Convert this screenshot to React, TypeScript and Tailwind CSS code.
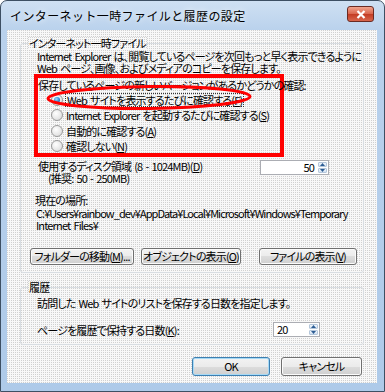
import type { ReactNode } from "react";

const dither =
  "bg-[#f8f8f8] bg-[conic-gradient(at_1px_1px,transparent_75%,#d0d0d0_0)] [background-size:2px_2px]";

function U({ children }: { children: ReactNode }) {
  return <span className="underline underline-offset-[1px]">{children}</span>;
}

function Radio({ checked }: { checked?: boolean }) {
  return (
    <div className="flex h-[12px] w-[12px] shrink-0 items-center justify-center rounded-full border border-[#9a9a9a] bg-[radial-gradient(circle_at_40%_35%,#ffffff,#e2e2e2_70%,#cfcfcf)]">
      {checked && (
        <div className="h-[6px] w-[6px] rounded-full bg-[radial-gradient(circle_at_40%_35%,#9fe0ff,#2b86d0_55%,#0f4f8f)]" />
      )}
    </div>
  );
}

function Arrow({ up }: { up?: boolean }) {
  return (
    <svg width="5" height="3" viewBox="0 0 5 3">
      <path d={up ? "M2.5 0 L5 3 L0 3 Z" : "M0 0 L5 0 L2.5 3 Z"} fill="#2d5d94" />
    </svg>
  );
}

function Spin({ value, className, right }: { value: string; className: string; right?: boolean }) {
  return (
    <div className={`flex shrink-0 border border-[#abadb3] bg-white ${className}`}>
      <div className={`flex flex-1 items-center px-[3px] ${right ? "justify-end" : "justify-start"}`}>{value}</div>
      <div className="flex w-[11px] flex-col gap-px p-px">
        <div className="flex flex-1 items-center justify-center rounded-[1px] border border-[#b5c7db] bg-gradient-to-b from-[#f3f7fc] to-[#d3e2f2]">
          <Arrow up />
        </div>
        <div className="flex flex-1 items-center justify-center rounded-[1px] border border-[#b5c7db] bg-gradient-to-b from-[#f3f7fc] to-[#d3e2f2]">
          <Arrow />
        </div>
      </div>
    </div>
  );
}

function Btn({ children, className, primary }: { children: ReactNode; className: string; primary?: boolean }) {
  return (
    <div
      className={`flex shrink-0 items-center justify-center rounded-[3px] border bg-[linear-gradient(#f3f3f3,#ebebeb_50%,#dddddd_50%,#cfcfcf)] ${
        primary ? "border-[#3c7fb1] shadow-[inset_0_0_0_1px_#a7d9f5]" : "border-[#707070] shadow-[inset_0_0_0_1px_#fbfbfb]"
      } ${className}`}
    >
      {children}
    </div>
  );
}

export default function App() {
  return (
    <div className="h-[392px] w-[385px] overflow-hidden whitespace-nowrap font-['Noto_Sans_CJK_JP',sans-serif] text-[11px] tracking-[-0.85px] text-black [word-spacing:1.5px] [font-feature-settings:'palt']">
      <div className="flex h-full w-full flex-col rounded-t-[7px] border border-[#3d4f63] bg-[linear-gradient(180deg,#cfe0f3,#b9d1ec_30px,#aecae9)]">
        {/* title bar */}
        <div className="flex h-[29px] shrink-0 items-center justify-between pl-[9px] pr-[10px]">
          <div className="pt-px text-[12px] tracking-[0.4px] [font-feature-settings:normal] [text-shadow:0_0_6px_#ffffff]">
            インターネット一時ファイルと履歴の設定
          </div>
          <div className="mb-[3px] flex h-[16px] w-[27px] items-center justify-center rounded-[3px] border border-[#6b2a22] bg-[linear-gradient(#f0a48e,#d9644b_50%,#c23a22_50%,#d8664c)]">
            <svg width="10" height="9" viewBox="0 0 10 9">
              <path d="M1.5 1 L8.5 8 M8.5 1 L1.5 8" stroke="#fff" strokeWidth="2.2" />
            </svg>
          </div>
        </div>

        {/* client area */}
        <div className={`ml-[6px] mr-[7px] flex h-[353px] flex-col ${dither}`}>
          {/* temporary files group */}
          <div className="mx-[13px] mt-[13px] flex flex-col rounded-[3px] border border-[#d8dde2] pb-[7px]">
            <div className={`-mt-[7px] ml-[7px] h-[12px] w-fit px-px leading-[12px] ${dither}`}>インターネット一時ファイル</div>
            <div className="ml-[16px] mt-px h-[12px] leading-[12px]">
              Internet Explorer は、閲覧しているページを次回もっと早く表示できるように
            </div>
            <div className="ml-[16px] h-[12px] leading-[12px]">Web ページ、画像、およびメディアのコピーを保存します。</div>

            <div className="relative ml-[13px] w-[250px] border-4 border-[#ff0000]">
              <div className="h-[14px] leading-[14px]">保存しているページの新しいバージョンがあるかどうかの確認:</div>
              <div className="flex h-[15px] items-center pl-[13px]">
                <Radio checked />
                <span className="ml-[2px] h-[14px] border border-dotted border-[#333] px-px leading-[12px]">
                  Web サイトを表示するたびに確認する(<U>F</U>)
                </span>
              </div>
              <div className="flex h-[16px] items-center pl-[13px]">
                <Radio />
                <span className="ml-[3px] leading-[12px]">
                  Internet Explorer を起動するたびに確認する(<U>S</U>)
                </span>
              </div>
              <div className="flex h-[15px] items-center pl-[13px]">
                <Radio />
                <span className="ml-[3px] leading-[12px]">
                  自動的に確認する(<U>A</U>)
                </span>
              </div>
              <div className="flex h-[15px] items-center pl-[13px]">
                <Radio />
                <span className="ml-[3px] leading-[12px]">
                  確認しない(<U>N</U>)
                </span>
              </div>
              <svg className="absolute left-[7px] top-[7px]" width="208" height="26" viewBox="0 0 208 26">
                <ellipse cx="104" cy="12.5" rx="101" ry="11" fill="none" stroke="#ff0000" strokeWidth="3" transform="rotate(-0.6 104 12.5)" />
              </svg>
            </div>

            <div className="mt-[3px] flex items-start">
              <div className="ml-[17px] flex flex-col">
                <div className="h-[12px] leading-[12px]">
                  使用するディスク領域 (8 - 1024MB)(<U>D</U>)
                </div>
                <div className="h-[12px] pl-[10px] leading-[12px]">(推奨: 50 - 250MB)</div>
              </div>
              <Spin value="50" right className="ml-auto mr-[34px] h-[15px] w-[69px]" />
            </div>

            <div className="ml-[14px] mt-[10px] h-[12px] leading-[12px]">現在の場所:</div>
            <div className="ml-[15px] mt-px h-[12px] leading-[12px] tracking-[-0.95px] [word-spacing:0px]">
              C:¥Users¥rainbow_dev¥AppData¥Local¥Microsoft¥Windows¥Temporary
            </div>
            <div className="ml-[15px] h-[12px] leading-[12px]">Internet Files¥</div>

            <div className="ml-[9px] mt-[17px] flex">
              <Btn className="h-[17px] w-[104px]">
                フォルダーの移動(<U>M</U>)...
              </Btn>
              <Btn className="ml-[7px] h-[17px] w-[100px]">
                オブジェクトの表示(<U>O</U>)
              </Btn>
              <Btn className="ml-[18px] h-[17px] w-[98px]">
                ファイルの表示(<U>V</U>)
              </Btn>
            </div>
          </div>

          {/* history group */}
          <div className="mx-[13px] mt-[14px] flex flex-col rounded-[3px] border border-[#d8dde2] pb-[7px]">
            <div className={`-mt-[7px] ml-[7px] h-[12px] w-fit px-px leading-[12px] ${dither}`}>履歴</div>
            <div className="ml-[16px] mt-[4px] h-[12px] leading-[12px]">
              訪問した Web サイトのリストを保存する日数を指定します。
            </div>
            <div className="mt-[13px] flex h-[15px] items-center">
              <div className="ml-[16px] leading-[12px]">
                ページを履歴で保持する日数(<U>K</U>):
              </div>
              <Spin value="20" className="ml-auto mr-[43px] h-[15px] w-[47px]" />
            </div>
          </div>

          <div className="mr-[15px] mt-[12px] flex justify-end">
            <Btn primary className="h-[19px] w-[78px]">
              OK
            </Btn>
            <Btn className="ml-[11px] h-[19px] w-[81px]">キャンセル</Btn>
          </div>
        </div>
      </div>
    </div>
  );
}
